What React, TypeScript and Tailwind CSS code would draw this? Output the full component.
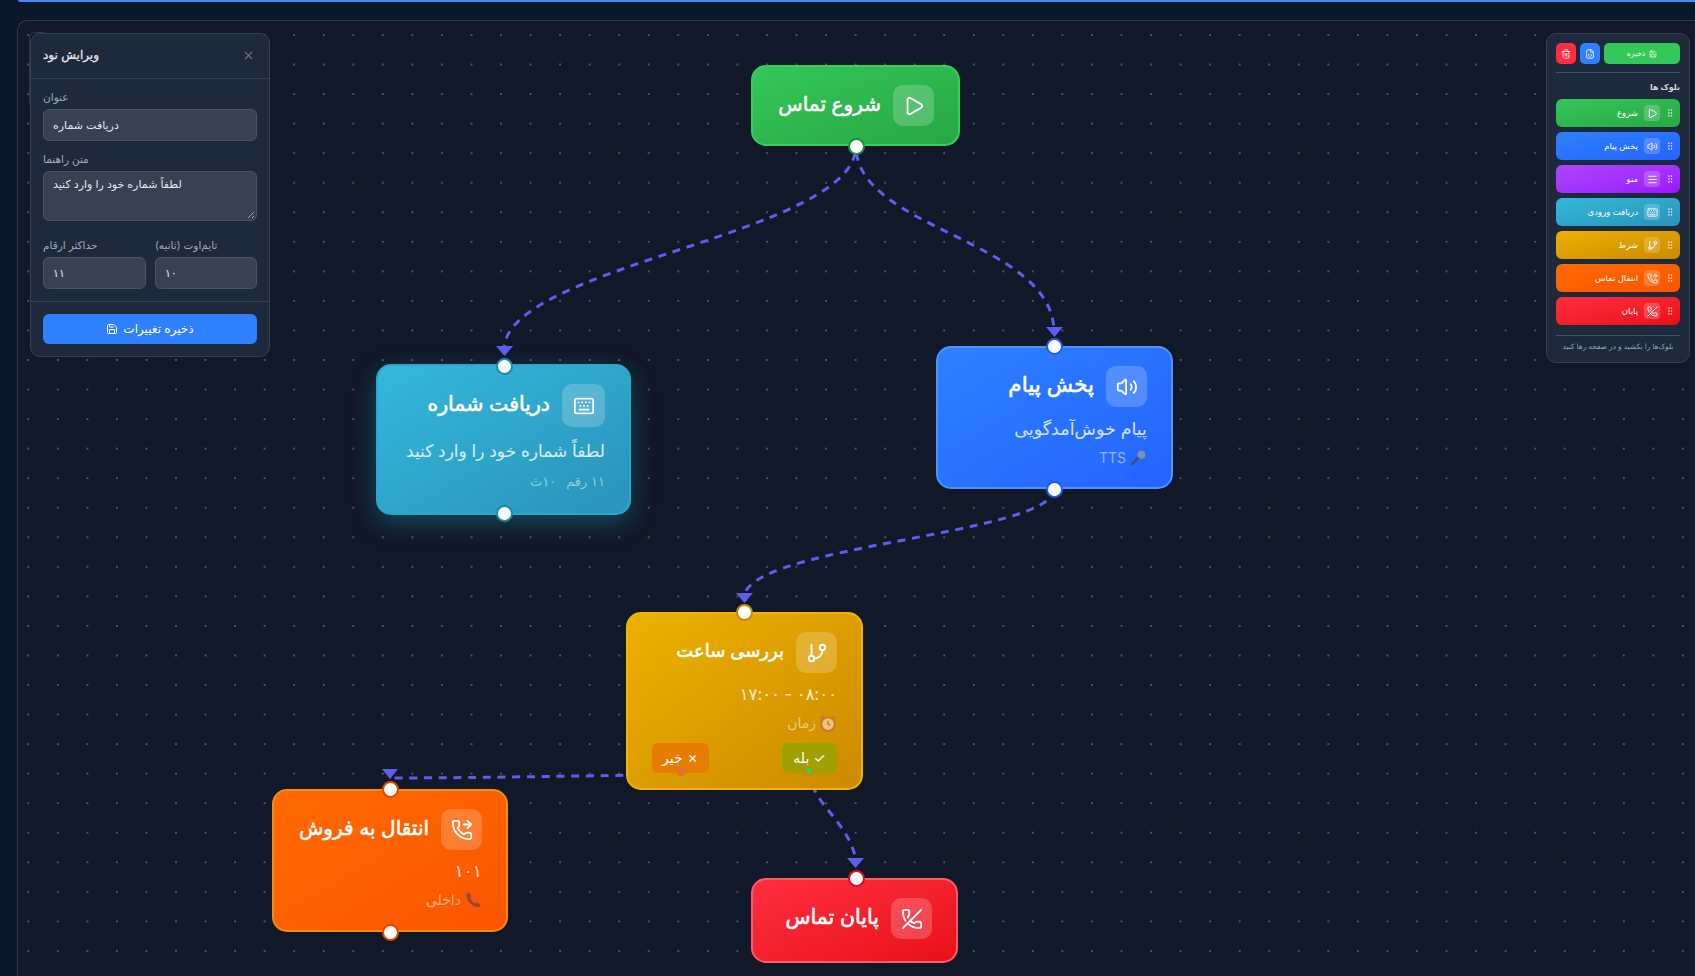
import React from 'react';
import {
  Play, Volume2, Keyboard, GitBranch, PhoneForwarded, PhoneOff, Menu, Save, FileCode, Trash2, GripVertical, X,
} from 'lucide-react';

const FONT = "font-['Inter','DejaVu_Sans',sans-serif]";

const palette = [
  { name: 'شروع', icon: Play, bg: 'bg-gradient-to-br from-[#34c759] to-[#28a745]' },
  { name: 'پخش پیام', icon: Volume2, bg: 'bg-gradient-to-br from-[#2f80ff] to-[#2563ff]' },
  { name: 'منو', icon: Menu, bg: 'bg-gradient-to-br from-[#ac45ff] to-[#9a14ff]' },
  { name: 'دریافت ورودی', icon: Keyboard, bg: 'bg-gradient-to-br from-[#34b8dc] to-[#2a93b9]' },
  { name: 'شرط', icon: GitBranch, bg: 'bg-gradient-to-br from-[#edb100] to-[#cc8a00]' },
  { name: 'انتقال تماس', icon: PhoneForwarded, bg: 'bg-gradient-to-br from-[#ff6a00] to-[#fb5500]' },
  { name: 'پایان', icon: PhoneOff, bg: 'bg-gradient-to-br from-[#ff2d3f] to-[#e80f15]' },
];

const Handle = ({ x, y, ring }: { x: number; y: number; ring: string }) => (
  <div className={`absolute w-[17px] h-[17px] -ml-[8.5px] -mt-[8.5px] rounded-full bg-white border-2 ${ring}`} style={{ left: x, top: y }} />
);

const Edges = () => (
  <svg className="absolute left-0 top-0 w-[1695px] h-[976px] pointer-events-none" fill="none">
    <g stroke="#5a5ff0" strokeWidth="3" strokeDasharray="8 6.700">
      <path strokeDashoffset="-7" d="M856 146C856 235 504 265 504 350" />
      <path strokeDashoffset="-7" d="M856 146C856 230 1054 240 1054 332" />
      <path d="M1054 489C1054 535 744 545 744 598" />
      <path d="M682 774C600 776 450 778 392 778" />
      <path d="M809 771C812 805 848 820 856 860" />
    </g>
    <g fill="#5a5ff0">
      <path d="M496 346H513L504.500 356Z" />
      <path d="M1046 327H1063L1054.500 337Z" />
      <path d="M736 593H753L744.500 603Z" />
      <path d="M382 769H398L390 779Z" />
      <path d="M847 858H864L855.500 868Z" />
    </g>
  </svg>
);

const Label = ({ text, gap }: { text: string; gap: string }) => (
  <div className={`text-[10.500px] leading-[16px] text-[#a1abb9] ${gap}`}>{text}</div>
);

const Input = ({ value }: { value: string }) => (
  <div className="h-[32px] rounded-md bg-[#374151] border border-[#4b5563] px-[9px] flex items-center text-[11px] text-[#e5e7eb]">{value}</div>
);

const EditPanel = () => (
  <div className="absolute left-[30px] top-[33px] w-[240px] h-[324px] rounded-[10px] bg-[#1e293b] border border-[#334155] flex flex-col text-left">
    <div className="h-[45px] pb-[2px] border-b border-[#334155] px-[12px] flex items-center justify-between">
      <span className="text-[12px] text-[#e5e7eb] [-webkit-text-stroke:0.3px_#e5e7eb]">ویرایش نود</span>
      <X className="w-[13px] h-[13px] mr-[2px] text-[#6b7280]" />
    </div>
    <div className="flex-1 px-[12px] pt-[11px]">
      <Label text="عنوان" gap="mb-[3px]" />
      <Input value="دریافت شماره" />
      <div className="mt-[11px]">
        <Label text="متن راهنما" gap="mb-[3px]" />
        <div className="relative h-[50px] rounded-md bg-[#374151] border border-[#4b5563] px-[9px] py-[4px] text-[11px] text-[#e5e7eb]">
          لطفاً شماره خود را وارد کنید
          <svg className="absolute right-[1px] bottom-[1px] w-[8px] h-[8px]" viewBox="0 0 8 8" stroke="#9ca3af" strokeWidth="1">
            <path d="M1 7L7 1M5 7L7 5" />
          </svg>
        </div>
      </div>
      <div className="flex gap-[9px] mt-[17px]">
        <div className="w-[103px]">
          <Label text="حداکثر ارقام" gap="mb-[3px]" />
          <Input value="۱۱" />
        </div>
        <div className="w-[102px]">
          <Label text="تایم‌اوت (ثانیه)" gap="mb-[3px]" />
          <Input value="۱۰" />
        </div>
      </div>
    </div>
    <div className="h-[55px] border-t border-[#334155] px-[12px] pt-[12px]">
      <div className="h-[30px] rounded-md bg-[#2f80ff] flex items-center justify-center gap-[5px] text-[12px] text-white">
        <Save className="w-[12px] h-[12px]" />
        <span>ذخیره تغییرات</span>
      </div>
    </div>
  </div>
);

const Toolbar = () => (
  <div dir="rtl" className="absolute left-[1546px] top-[33px] w-[144px] h-[330px] rounded-[10px] bg-[#1e293b] border border-[#334155] px-[9px] pt-[9px]">
    <div className="flex gap-[4px] h-[21px]">
      <div className="flex-1 rounded-[5px] bg-[#34c759] flex items-center justify-center gap-[4px] text-[7.500px] text-white">
        <Save className="w-[8px] h-[8px]" />
        <span>ذخیره</span>
      </div>
      <div className="w-[20px] rounded-[5px] bg-[#2f80ff] flex items-center justify-center">
        <FileCode className="w-[10px] h-[10px] text-white" />
      </div>
      <div className="w-[20px] rounded-[5px] bg-[#ff2d3f] flex items-center justify-center">
        <Trash2 className="w-[10px] h-[10px] text-white" />
      </div>
    </div>
    <div className="h-px bg-[#475569] mt-[8px]" />
    <div className="text-[8px] font-bold text-[#d1d5db] mt-[6px] h-[20px] leading-[16px]">بلوک ها</div>
    <div className="flex flex-col gap-[5px]">
      {palette.map((item) => {
        const Icon = item.icon;
        return (
          <div key={item.name} className={`h-[28px] rounded-[6px] ${item.bg} flex items-center pr-[5px] gap-[5px] text-[8.500px] text-white`}>
            <GripVertical className="w-[10px] h-[10px] text-white/70" />
            <div className="w-[16px] h-[16px] rounded-[4px] bg-white/20 flex items-center justify-center">
              <Icon className="w-[11px] h-[11px]" />
            </div>
            <span className="mr-[1px]">{item.name}</span>
          </div>
        );
      })}
    </div>
    <div className="h-px bg-[#475569] mt-[10px]" />
    <div className="text-[7.400px] text-center whitespace-nowrap text-[#94a3b8] mt-[5px]">بلوک‌ها را بکشید و در صفحه رها کنید</div>
  </div>
);

const NodeBox = ({ x, y, w, h, bg, border, icon: Icon, title, extra, box, size, children }: {
  x: number; y: number; w: number; h: number; bg: string; border: string; icon: React.ElementType; title: string; extra?: string; box?: string; size?: string; children?: React.ReactNode;
}) => (
  <div
    dir="rtl"
    className={`absolute rounded-[15px] border-2 ${bg} ${border} ${extra ?? ''} pt-[18px] pr-[24px] pl-[24px] text-white`}
    style={{ left: x, top: y, width: w, height: h }}
  >
    <div className="flex items-center gap-[12px]">
      <div className={`${box ?? 'w-[41px] h-[41px]'} rounded-[10px] bg-white/20 flex items-center justify-center shrink-0`}>
        <Icon className="w-[22px] h-[22px]" />
      </div>
      <div className={`${size ?? 'text-[20px]'} leading-none -mt-[3px] whitespace-nowrap [-webkit-text-stroke:0.6px_white]`}>{title}</div>
    </div>
    {children}
  </div>
);

const Mic = () => (
  <svg viewBox="0 0 16 16" className="w-[18px] h-[18px]" fill="none">
    <path d="M1 13.500L8 6L10 8L2.500 15Z" fill="#3a5272" />
    <circle cx="11" cy="5" r="3.500" fill="#7b93b3" />
  </svg>
);
const Alarm = () => (
  <svg viewBox="0 0 16 16" className="w-[18px] h-[18px]" fill="none">
    <circle cx="8" cy="9" r="6" fill="#e8c67e" stroke="#d9702a" strokeWidth="1.600" />
    <path d="M1.500 4L4 1.500M14.500 4L12 1.500" stroke="#d9702a" strokeWidth="2" />
    <path d="M8 6V9L10 10" stroke="#a06a3a" />
  </svg>
);
const Phone = () => (
  <svg viewBox="0 0 16 16" className="w-[18px] h-[18px]" fill="none">
    <path d="M3 1.500C2 3 2 7 5 10.500C8 14 12 15 14 14L14.500 12L11.500 10L10 11C8 10.500 6 8 5.500 6L6.500 5L5 2Z" fill="#8f4a48" />
  </svg>
);

export default function App() {
  return (
    <div className={`relative w-[1695px] h-[976px] overflow-hidden bg-[#0b1829] ${FONT}`}>
      <div className="absolute left-[18px] right-0 top-0 h-[2px] bg-[#3b8dff] rounded-bl-sm" />
      <div className="absolute left-[17px] top-[20px] right-0 bottom-0 rounded-tl-[10px] border-l border-t border-[#2b3a4d] bg-[#111827] bg-[radial-gradient(#4b5563_1px,transparent_1px)] bg-[size:29.560px_29.560px] bg-[position:-4.500px_-0.800px]" />
      <Edges />

      <NodeBox x={751} y={65} w={209} h={81} bg="bg-gradient-to-br from-[#34c759] to-[#28a745]" border="border-[#34d058]" icon={Play} title="شروع تماس" />

      <NodeBox x={376} y={364} w={255} h={151} bg="bg-gradient-to-br from-[#34b8dc] to-[#2a93b9]" border="border-[#28a9cc]" icon={Keyboard} title="دریافت شماره" box="w-[43px] h-[43px]" size="text-[20.500px]" extra="shadow-[0_8px_24px_rgba(34,184,220,0.3)]">
        <div className="mt-[12px] text-[17px] leading-[24px] text-white/80 whitespace-nowrap">لطفاً شماره خود را وارد کنید</div>
        <div className="mt-[9px] text-[13px] leading-[18px] text-white/50 flex gap-[10px]">
          <span>۱۱ رقم</span>
          <span>۱۰ث</span>
        </div>
      </NodeBox>

      <NodeBox x={936} y={346} w={237} h={143} bg="bg-gradient-to-br from-[#2f80ff] to-[#2563ff]" border="border-[#4d94ff]" icon={Volume2} title="پخش پیام" size="text-[21.500px]">
        <div className="mt-[10px] text-[17.500px] leading-[24px] text-white/80 whitespace-nowrap">پیام خوش‌آمدگویی</div>
        <div className="mt-[8px] text-[14px] leading-[18px] text-white/50 flex items-center gap-[3px]">
          <Mic />
          <span>TTS</span>
        </div>
      </NodeBox>

      <NodeBox x={626} y={612} w={237} h={178} bg="bg-gradient-to-br from-[#edb100] to-[#cc8a00]" border="border-[#f0b500]" icon={GitBranch} title="بررسی ساعت" size="text-[18px]">
        <div className="mt-[9px] text-[16.500px] leading-[24px] text-white/80 whitespace-nowrap">۰۸:۰۰ - ۱۷:۰۰</div>
        <div className="mt-[8px] text-[14px] leading-[18px] text-white/50 flex items-center gap-[3px]">
          <Alarm />
          <span>زمان</span>
        </div>
        <div className="mt-[11px] flex justify-between text-[14px]">
          <div className="w-[55px] h-[30px] pb-[2px] rounded-[6px] bg-[#a0a000] flex items-center justify-center">✓ بله</div>
          <div className="w-[57px] h-[30px] pb-[2px] rounded-[6px] bg-[#e87c00] flex items-center justify-center">✗ خیر</div>
        </div>
      </NodeBox>

      <NodeBox x={272} y={789} w={236} h={143} bg="bg-gradient-to-br from-[#ff6a00] to-[#fb5500]" border="border-[#f28d0f]" icon={PhoneForwarded} title="انتقال به فروش">
        <div className="mt-[9px] text-[17px] leading-[24px] text-white/80">۱۰۱</div>
        <div className="mt-[8px] text-[14px] leading-[18px] text-white/50 flex items-center gap-[3px]">
          <Phone />
          <span>داخلی</span>
        </div>
      </NodeBox>

      <NodeBox x={751} y={878} w={207} h={85} bg="bg-gradient-to-br from-[#ff2d3f] to-[#e80f15]" border="border-[#ff5a66]" icon={PhoneOff} title="پایان تماس" size="text-[20.500px]" />

      <Handle x={856} y={146} ring="border-[#1f8f3a]" />
      <Handle x={504.5} y={366.5} ring="border-[#1f8aa8]" />
      <Handle x={504.5} y={513.5} ring="border-[#1f8aa8]" />
      <Handle x={1054.5} y={346} ring="border-[#1d5fe0]" />
      <Handle x={1054.5} y={489} ring="border-[#1d5fe0]" />
      <Handle x={744.5} y={612} ring="border-[#c98a00]" />
      <Handle x={390} y={789} ring="border-[#e04a00]" />
      <Handle x={390} y={932} ring="border-[#e04a00]" />
      <Handle x={856} y={878} ring="border-[#d81020]" />
      <div className="absolute left-[804px] top-[766px] w-[10px] h-[10px] rounded-full bg-[#34d158] border-2 border-[#c98a00]" />
      <div className="absolute left-[676px] top-[766px] w-[10px] h-[10px] rounded-full bg-[#ff5c5c] border-2 border-[#c98a00]" />

      <div className="absolute left-[29px] top-[32px] w-[20px] h-[76px] rounded-md border border-[#2b3a4d]" />
      <EditPanel />
      <Toolbar />
    </div>
  );
}
